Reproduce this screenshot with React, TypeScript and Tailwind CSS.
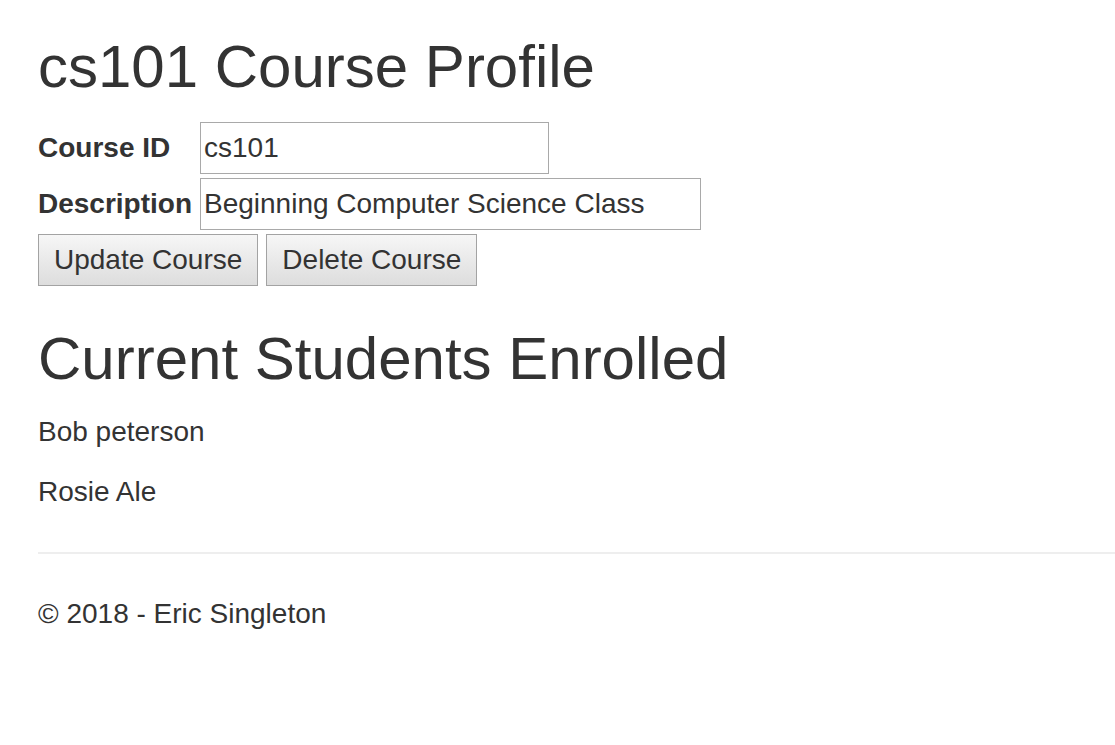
export default function App() {
  const font = "font-['Liberation_Sans',Arial,sans-serif]";
  const btn =
    "h-[52px] px-[15px] border border-[#a3a3a3] bg-gradient-to-b from-[#f6f6f6] to-[#dddddd] text-[28px] leading-none text-[#333]";
  return (
    <div className={`min-h-screen bg-white pl-[38px] text-[#333] ${font}`}>
      <h1 className="mt-[34px] text-[60px] leading-[66px] font-normal">cs101 Course Profile</h1>

      <form className="mt-[22px] flex flex-col gap-[4px]">
        <div className="flex items-center">
          <label className="w-[162px] text-[28px] font-bold">Course ID</label>
          <input
            defaultValue="cs101"
            className="w-[349px] h-[52px] border border-[#a9a9a9] px-[3px] text-[28px] text-[#333] outline-none"
          />
        </div>
        <div className="flex items-center">
          <label className="w-[162px] text-[28px] font-bold">Description</label>
          <input
            defaultValue="Beginning Computer Science Class"
            className="w-[501px] h-[52px] border border-[#a9a9a9] px-[3px] text-[28px] text-[#333] outline-none"
          />
        </div>
        <div className="flex gap-[8px]">
          <button type="button" className={btn}>
            Update Course
          </button>
          <button type="button" className={btn}>
            Delete Course
          </button>
        </div>
      </form>

      <h2 className="mt-[40px] text-[60px] leading-[66px] font-normal">Current Students Enrolled</h2>
      <div className="mt-[20px] text-[28px] leading-[40px]">
        <p className="mb-[20px]">Bob peterson</p>
        <p className="mb-[20px]">Rosie Ale</p>
      </div>

      <hr className="mt-[40px] border-0 border-t-2 border-[#eeeeee]" />
      <footer className="mt-[40px] text-[28px] leading-[40px]">
        <p>© 2018 - Eric Singleton</p>
      </footer>
    </div>
  );
}
